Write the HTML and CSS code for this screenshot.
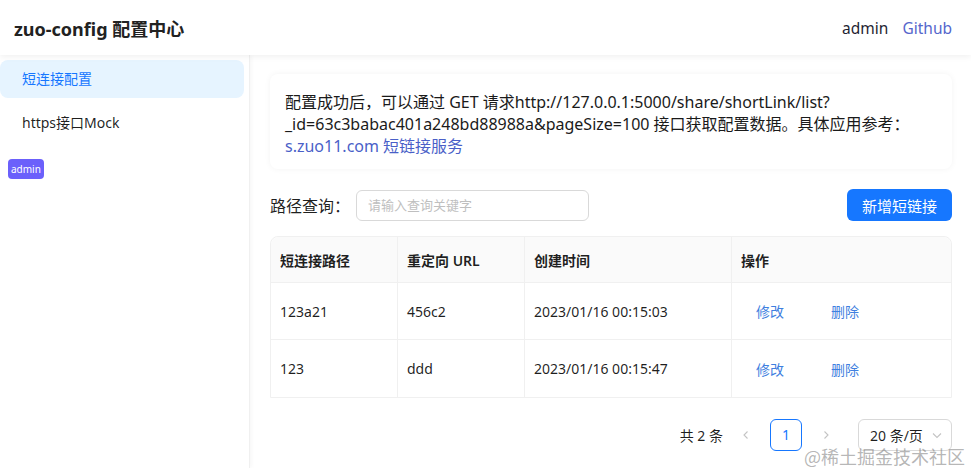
FILE: index.html
```html
<!DOCTYPE html>
<html lang="zh-CN">
<head>
    <meta charset="UTF-8">
    <meta name="viewport" content="width=device-width, initial-scale=1.0">
    <title>zuo-config 配置中心</title>
    <link rel="stylesheet" href="styles.css">
</head>
<body>
    <header class="top-bar">
        <div class="brand">zuo-config 配置中心</div>
        <div class="top-links">
            <span class="user-name">admin</span>
            <a class="github-link" href="#">Github</a>
        </div>
    </header>

    <div class="layout">
        <aside class="side-nav">
            <ul class="menu">
                <li class="menu-item active">短连接配置</li>
                <li class="menu-item">https接口Mock</li>
            </ul>
            <span class="role-tag">admin</span>
        </aside>

        <main class="content">
            <div class="tip-card">
                配置成功后，可以通过 GET 请求http://127.0.0.1:5000/share/shortLink/list?<wbr>_id=63c3babac401a248bd88988a&amp;pageSize=100 接口获取配置数据。具体应用参考：<a class="tip-link" href="#">s.zuo11.com 短链接服务</a>
            </div>

            <div class="toolbar">
                <div class="search">
                    <label class="search-label">路径查询：</label>
                    <input class="search-input" type="text" placeholder="请输入查询关键字">
                </div>
                <button class="btn-primary">新增短链接</button>
            </div>

            <table class="link-table">
                <thead>
                    <tr>
                        <th class="col-path">短连接路径</th>
                        <th class="col-url">重定向 URL</th>
                        <th class="col-time">创建时间</th>
                        <th>操作</th>
                    </tr>
                </thead>
                <tbody>
                    <tr>
                        <td>123a21</td>
                        <td>456c2</td>
                        <td>2023/01/16 00:15:03</td>
                        <td class="actions"><a href="#">修改</a><a href="#">删除</a></td>
                    </tr>
                    <tr>
                        <td>123</td>
                        <td>ddd</td>
                        <td>2023/01/16 00:15:47</td>
                        <td class="actions"><a href="#">修改</a><a href="#">删除</a></td>
                    </tr>
                </tbody>
            </table>

            <div class="pager">
                <span class="pager-total">共 2 条</span>
                <span class="pager-arrow">
                    <svg width="10" height="10" viewBox="0 0 10 10"><path d="M6.5 1.5 L3 5 L6.5 8.5" fill="none" stroke="#c4c4c4" stroke-width="1.1"/></svg>
                </span>
                <span class="pager-item current">1</span>
                <span class="pager-arrow next">
                    <svg width="10" height="10" viewBox="0 0 10 10"><path d="M3.5 1.5 L7 5 L3.5 8.5" fill="none" stroke="#c4c4c4" stroke-width="1.1"/></svg>
                </span>
                <span class="pager-size">20 条/页
                    <svg class="caret" width="12" height="12" viewBox="0 0 12 12"><path d="M2 4.5 L6 8.5 L10 4.5" fill="none" stroke="#c4c4c4" stroke-width="1.1"/></svg>
                </span>
            </div>
        </main>
    </div>

    <div class="watermark">@稀土掘金技术社区</div>
</body>
</html>
```

FILE: styles.css
```css
* {
    margin: 0;
    padding: 0;
    box-sizing: border-box;
}

body {
    font-family: "Segoe UI", "Noto Sans", "Noto Sans CJK SC", sans-serif;
    font-size: 14px;
    color: rgba(0, 0, 0, 0.88);
    background: #fff;
    height: 468px;
    overflow: hidden;
}

a {
    text-decoration: none;
}

.top-bar {
    height: 55px;
    display: flex;
    align-items: center;
    justify-content: space-between;
    padding: 0 19px 0 14px;
    background: #fff;
    box-shadow: 0 2px 6px rgba(0, 0, 0, 0.06);
    position: relative;
    z-index: 2;
}

.brand {
    font-size: 18px;
    font-weight: 700;
    color: #222;
}

.top-links {
    display: flex;
    gap: 14px;
    font-size: 15.5px;
}

.user-name {
    color: #1f1f33;
}

.github-link {
    color: #5566cc;
}

.layout {
    display: flex;
    height: 413px;
}

.side-nav {
    width: 250px;
    flex-shrink: 0;
    border-right: 1px solid #f0f0f0;
    box-shadow: 2px 0 4px rgba(0, 0, 0, 0.03);
    padding-top: 5px;
}

.menu {
    list-style: none;
    width: 244px;
}

.menu-item {
    height: 38px;
    line-height: 38px;
    padding-left: 22px;
    border-radius: 8px;
    margin-bottom: 6px;
    color: rgba(0, 0, 0, 0.88);
}

.menu-item.active {
    background: #e6f4ff;
    color: #1677ff;
}

.role-tag {
    display: inline-block;
    margin: 11px 0 0 8px;
    padding: 0 3px;
    height: 20px;
    line-height: 20px;
    font-size: 10px;
    color: #fff;
    background: #6b60fb;
    border-radius: 4px;
}

.content {
    flex: 1;
    padding: 19px 19px 0 20px;
}

.tip-card {
    font-size: 16px;
    line-height: 22px;
    padding: 17px 15px 12px;
    border-radius: 8px;
    box-shadow: 0 0 6px rgba(0, 0, 0, 0.05);
    color: #1a1a1a;
}

.tip-link {
    color: #4a5fc8;
}

.toolbar {
    display: flex;
    justify-content: space-between;
    align-items: center;
    margin-top: 20px;
}

.search {
    display: flex;
    align-items: center;
}

.search-label {
    font-size: 16px;
    width: 86px;
}

.search-input {
    width: 233px;
    height: 31px;
    border: 1px solid #d9d9d9;
    border-radius: 6px;
    padding: 0 11px;
    font-family: inherit;
    font-size: 13px;
    outline: none;
}

.search-input::placeholder {
    color: #bfbfbf;
}

.btn-primary {
    height: 32px;
    padding: 0 15px;
    border: none;
    border-radius: 6px;
    background: #1677ff;
    color: #fff;
    font-family: inherit;
    font-size: 15px;
    cursor: pointer;
}

.link-table {
    width: 100%;
    margin-top: 15px;
    border-collapse: separate;
    border-spacing: 0;
    border: 1px solid #f0f0f0;
    border-radius: 8px 8px 0 0;
    table-layout: fixed;
}

.link-table th,
.link-table td {
    text-align: left;
    padding: 0 9px;
    border-bottom: 1px solid #f0f0f0;
}

.link-table th + th,
.link-table td + td {
    border-left: 1px solid #f0f0f0;
}

.link-table tr:last-child td {
    border-bottom: none;
}

.link-table th {
    height: 46px;
    background: #fafafa;
    font-weight: 600;
}

.link-table th:first-child {
    border-top-left-radius: 8px;
}

.link-table th:last-child {
    border-top-right-radius: 8px;
}

.link-table td {
    height: 57px;
}

.col-path {
    width: 126px;
}

.col-url {
    width: 127px;
}

.col-time {
    width: 207px;
}

.actions a {
    color: #3f7fe0;
    margin-left: 15px;
    margin-right: 32px;
}

.pager {
    display: flex;
    justify-content: flex-end;
    align-items: center;
    margin-top: 21px;
}

.pager-total {
    margin-right: 7px;
}

.pager-arrow {
    width: 32px;
    height: 32px;
    display: flex;
    align-items: center;
    justify-content: center;
}

.pager-item {
    width: 32px;
    height: 32px;
    line-height: 30px;
    text-align: center;
    border: 1px solid #1677ff;
    border-radius: 6px;
    color: #1677ff;
    margin: 0 8px;
}

.pager-size {
    display: flex;
    align-items: center;
    justify-content: space-between;
    width: 94px;
    height: 32px;
    margin-left: 16px;
    padding: 0 8px 0 11px;
    border: 1px solid #d9d9d9;
    border-radius: 6px;
}

.watermark {
    position: absolute;
    right: 6px;
    bottom: 3px;
    font-size: 18px;
    line-height: 1;
    color: rgba(120, 120, 120, 0.55);
    font-family: "Noto Sans CJK SC", sans-serif;
    pointer-events: none;
}
```
